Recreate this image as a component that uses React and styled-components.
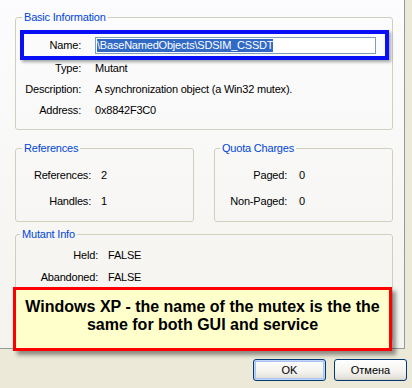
import React from "react";
import styled, { createGlobalStyle } from "styled-components";

const GlobalStyle = createGlobalStyle`
  html, body {
    margin: 0;
    padding: 0;
  }
  body {
    width: 412px;
    height: 388px;
    overflow: hidden;
    background: #ece9d8;
    font-family: "Liberation Sans", Arial, sans-serif;
    font-size: 11px;
    letter-spacing: -0.2px;
    color: #000;
  }
`;

const App = () => {
  return (
    <>
      <GlobalStyle />
      <Dialog>
        <TabPage>
          <Group $pb={9}>
            <Legend $ml={6}>Basic Information</Legend>
            <Highlight>
              <Label>Name:</Label>
              <TextField>
                <Selected>\BaseNamedObjects\SDSIM_CSSDT</Selected>
              </TextField>
            </Highlight>
            <Row $label={65} $gap={14} $h={21}>
              <Label>Type:</Label>
              <span>Mutant</span>
            </Row>
            <Row $label={65} $gap={14} $h={21}>
              <Label>Description:</Label>
              <span>A synchronization object (a Win32 mutex).</span>
            </Row>
            <Row $label={65} $gap={14} $h={21}>
              <Label>Address:</Label>
              <span>0x8842F3C0</span>
            </Row>
          </Group>

          <Pair>
            <Group $pt={7} $pb={7}>
              <Legend $ml={6}>References</Legend>
              <Row $label={75} $gap={10} $h={26}>
                <Label>References:</Label>
                <span>2</span>
              </Row>
              <Row $label={75} $gap={10} $h={26}>
                <Label>Handles:</Label>
                <span>1</span>
              </Row>
            </Group>
            <Group $pt={7} $pb={7}>
              <Legend $ml={5}>Quota Charges</Legend>
              <Row $label={72} $gap={12} $h={26}>
                <Label>Paged:</Label>
                <span>0</span>
              </Row>
              <Row $label={72} $gap={12} $h={26}>
                <Label>Non-Paged:</Label>
                <span>0</span>
              </Row>
            </Group>
          </Pair>

          <Group $mt={5} $pt={3} $grow>
            <Legend $ml={4}>Mutant Info</Legend>
            <Row $label={82} $gap={10} $h={22}>
              <Label>Held:</Label>
              <span>FALSE</span>
            </Row>
            <Row $label={82} $gap={10} $h={22}>
              <Label>Abandoned:</Label>
              <span>FALSE</span>
            </Row>
          </Group>

          <Note>
            Windows XP - the name of the mutex is the the
            <br />
            same for both GUI and service
          </Note>
        </TabPage>

        <Footer>
          <Button $default>OK</Button>
          <Button>Отмена</Button>
        </Footer>
      </Dialog>
    </>
  );
};

export default App;

const Dialog = styled.div`
  width: 412px;
  height: 388px;
  display: flex;
  flex-direction: column;
`;

const TabPage = styled.div`
  position: relative;
  box-sizing: border-box;
  width: 405px;
  height: 349px;
  padding: 10px 11px 7px 15px;
  border-right: 1px solid #919b9c;
  border-bottom: 1px solid #919b9c;
  background: linear-gradient(to bottom, #fcfcfe, #f4f3ee);
  display: flex;
  flex-direction: column;
`;

const Group = styled.fieldset`
  margin: ${(p) => p.$mt || 0}px 0 0;
  padding: ${(p) => p.$pt || 0}px 0 ${(p) => p.$pb || 0}px;
  border: 1px solid #d0d0bf;
  border-radius: 3px;
  min-width: 0;
  flex: ${(p) => (p.$grow ? "1" : "none")};
`;

const Legend = styled.legend`
  margin-left: ${(p) => p.$ml}px;
  padding: 0 2px;
  color: #0046d5;
  line-height: 14px;
`;

const Highlight = styled.div`
  margin: 6px 3px -3px 4px;
  height: 30px;
  box-sizing: border-box;
  border: 4px solid #0a10f5;
  box-shadow: 2px 2px 3px rgba(0, 0, 0, 0.35);
  padding-right: 9px;
  display: grid;
  grid-template-columns: 57px 1fr;
  column-gap: 14px;
  align-items: center;
`;

const TextField = styled.div`
  height: 17px;
  box-sizing: border-box;
  border: 1px solid #7f9db9;
  background: #fff;
  padding: 0 1px;
  display: flex;
  align-items: center;
  white-space: nowrap;
  overflow: hidden;
`;

const Selected = styled.span`
  background: #316ac5;
  color: #fff;
  line-height: 13px;
`;

const Row = styled.div`
  display: grid;
  grid-template-columns: ${(p) => p.$label}px 1fr;
  column-gap: ${(p) => p.$gap}px;
  align-items: center;
  height: ${(p) => p.$h}px;
  white-space: nowrap;
`;

const Label = styled.span`
  text-align: right;
  white-space: nowrap;
`;

const Pair = styled.div`
  margin-top: 11px;
  display: grid;
  grid-template-columns: 1fr 1fr;
  column-gap: 20px;
`;

const Note = styled.div`
  position: absolute;
  left: 13px;
  top: 287px;
  width: 379px;
  height: 64px;
  box-sizing: border-box;
  border: 3px solid #ff0000;
  background: #ffffcc;
  box-shadow: 4px 4px 4px rgba(0, 0, 0, 0.4);
  padding-top: 8px;
  text-align: center;
  font-size: 16px;
  font-weight: bold;
  letter-spacing: 0;
  line-height: 18px;
  color: #000;
`;

const Footer = styled.div`
  display: flex;
  justify-content: flex-end;
  gap: 8px;
  padding: 10px 5px 0 0;
`;

const Button = styled.button`
  width: 73px;
  height: 22px;
  padding: 0;
  border: 1px solid #003c74;
  border-radius: 3px;
  background: linear-gradient(to bottom, #ffffff, #f3f2ee 60%, #dedbd2);
  box-shadow: ${(p) =>
    p.$default
      ? "inset 0 0 0 1px #c3d5f7, inset 0 0 0 2px #a9c4f2"
      : "inset 0 -1px 0 #d6d0c5"};
  font-family: "Liberation Sans", Arial, sans-serif;
  font-size: 11px;
  color: #000;
`;
